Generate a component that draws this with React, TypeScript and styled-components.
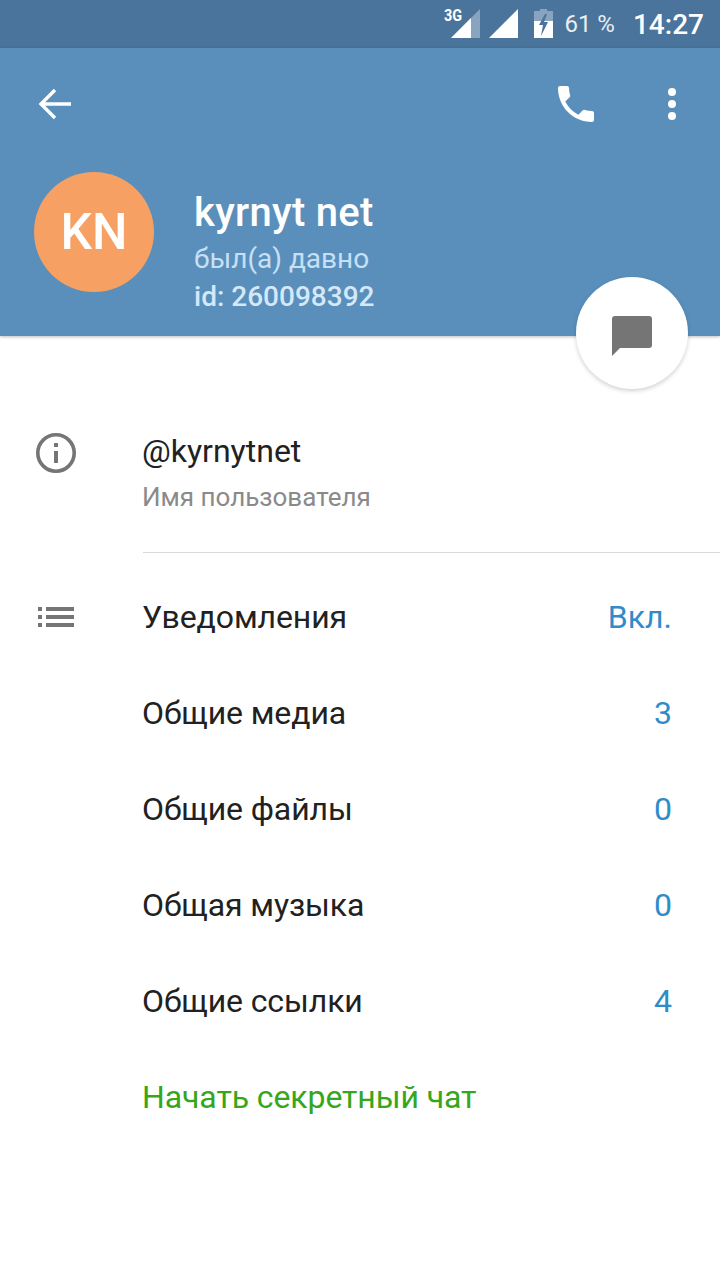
import styled, { createGlobalStyle } from "styled-components"

const GlobalStyle = createGlobalStyle`
    html, body {
        margin: 0;
        padding: 0;
        background: #fff;
        font-family: 'Roboto', 'Noto Sans', sans-serif;
    }
`

const rows = [
    { label: 'Общие медиа', value: '3' },
    { label: 'Общие файлы', value: '0' },
    { label: 'Общая музыка', value: '0' },
    { label: 'Общие ссылки', value: '4' },
]

const App = () => {
    return (
        <Page>
            <GlobalStyle />
            <StatusBar>
                <SignalWrap>
                    <NetLabel>3G</NetLabel>
                    <svg width="30" height="30" viewBox="0 0 30 30">
                        <path d="M0 29 L29 0 V29 Z" fill="#fff" fillOpacity="0.35" />
                        <path d="M0 29 L20 9 V29 Z" fill="#fff" />
                    </svg>
                </SignalWrap>
                <svg width="30" height="30" viewBox="0 0 30 30">
                    <path d="M0 29 L29 0 V29 Z" fill="#fff" />
                </svg>
                <BatteryIcon width="20" height="30" viewBox="0 0 20 30">
                    <path d="M6 0 H13 V2 H19 V12 H0 V2 H6 Z" fill="#fff" fillOpacity="0.35" />
                    <path d="M0 12 H19 V29 H0 Z" fill="#fff" />
                    <path d="M11 5 L5 16 H9 L7 27 L14 13 H10 L13 5 Z" fill="#4a749b" />
                </BatteryIcon>
                <BatteryText>61 %</BatteryText>
                <Clock>14:27</Clock>
            </StatusBar>
            <Header>
                <ActionBar>
                    <svg width="36" height="32" viewBox="0 0 36 32">
                        <path d="M33 16 H4 M17 2 L3 16 L17 30" fill="none" stroke="#fff" strokeWidth="3.4" />
                    </svg>
                    <ActionSpacer />
                    <svg width="48" height="48" viewBox="0 0 24 24">
                        <path d="M6.62 10.79c1.44 2.83 3.76 5.14 6.59 6.59l2.2-2.2c.27-.27.67-.36 1.02-.24 1.12.37 2.33.57 3.57.57.55 0 1 .45 1 1V20c0 .55-.45 1-1 1-9.39 0-17-7.61-17-17 0-.55.45-1 1-1h3.5c.55 0 1 .45 1 1 0 1.25.2 2.45.57 3.57.11.35.03.74-.25 1.02l-2.2 2.2z" fill="#fff" />
                    </svg>
                    <MenuDots>
                        <Dot />
                        <Dot />
                        <Dot />
                    </MenuDots>
                </ActionBar>
                <Profile>
                    <Avatar>KN</Avatar>
                    <ProfileText>
                        <Name>kyrnyt net</Name>
                        <Seen>был(а) давно</Seen>
                        <UserId>id: 260098392</UserId>
                    </ProfileText>
                </Profile>
                <Fab>
                    <svg width="40" height="40" viewBox="0 0 40 40">
                        <path d="M3 0 H37 A3 3 0 0 1 40 3 V29 A3 3 0 0 1 37 32 H8 L0 40 V3 A3 3 0 0 1 3 0 Z" fill="#757575" />
                    </svg>
                </Fab>
            </Header>
            <Content>
                <UsernameRow>
                    <IconSlot>
                        <svg width="40" height="40" viewBox="0 0 40 40">
                            <circle cx="20" cy="20" r="18.2" fill="none" stroke="#757575" strokeWidth="3.6" />
                            <rect x="18" y="18" width="4" height="12" fill="#757575" />
                            <rect x="18" y="10" width="4" height="4" fill="#757575" />
                        </svg>
                    </IconSlot>
                    <div>
                        <Username>@kyrnytnet</Username>
                        <UsernameHint>Имя пользователя</UsernameHint>
                    </div>
                </UsernameRow>
                <Divider />
                <MenuList>
                    <MenuRow>
                        <IconSlot>
                            <ListIcon width="36" height="20" viewBox="0 0 36 20">
                                <path d="M0 0h4v4H0zM8 0h28v4H8zM0 8h4v4H0zM8 8h28v4H8zM0 16h4v4H0zM8 16h28v4H8z" fill="#757575" />
                            </ListIcon>
                        </IconSlot>
                        <RowLabel>Уведомления</RowLabel>
                        <RowValue>Вкл.</RowValue>
                    </MenuRow>
                    {rows.map((row) => (
                        <MenuRow key={row.label}>
                            <IconSlot />
                            <RowLabel>{row.label}</RowLabel>
                            <RowValue>{row.value}</RowValue>
                        </MenuRow>
                    ))}
                    <MenuRow>
                        <IconSlot />
                        <RowLabel $green>Начать секретный чат</RowLabel>
                    </MenuRow>
                </MenuList>
            </Content>
        </Page>
    )
}

const Page = styled.div`
    width: 720px;
    height: 1280px;
    overflow: hidden;
    background: #fff;
`

const StatusBar = styled.div`
    height: 48px;
    box-sizing: border-box;
    background: #4a749b;
    display: flex;
    align-items: center;
    padding: 0 16px 0 0;
    justify-content: flex-end;
    color: #fff;
`

const SignalWrap = styled.div`
    position: relative;
    width: 30px;
    height: 30px;
    margin-right: 8px;
`

const NetLabel = styled.span`
    position: absolute;
    left: -7px;
    top: -1px;
    font-size: 16px;
    font-weight: 700;
    line-height: 16px;
    transform: scaleX(0.9);
    transform-origin: left top;
`

const BatteryIcon = styled.svg`
    margin-left: 15px;
`

const BatteryText = styled.span`
    font-size: 24px;
    margin-left: 10px;
    opacity: 0.88;
`

const Clock = styled.span`
    font-size: 28px;
    font-weight: 500;
    margin-left: 18px;
`

const Header = styled.div`
    position: relative;
    height: 288px;
    background: #5a8fbb;
    box-shadow: 0 1px 3px rgba(0, 0, 0, 0.25);
`

const ActionBar = styled.div`
    height: 112px;
    display: flex;
    align-items: center;
    padding: 0 44px 0 38px;
`

const ActionSpacer = styled.div`
    flex: 1;
`

const MenuDots = styled.div`
    display: flex;
    flex-direction: column;
    gap: 4px;
    margin-left: 68px;
`

const Dot = styled.span`
    width: 8px;
    height: 8px;
    border-radius: 50%;
    background: #fff;
`

const Profile = styled.div`
    display: flex;
    align-items: flex-start;
    padding: 12px 0 0 34px;
`

const Avatar = styled.div`
    width: 120px;
    height: 120px;
    border-radius: 50%;
    background: #f7a064;
    color: #fff;
    font-size: 50px;
    font-weight: 500;
    display: flex;
    align-items: center;
    justify-content: center;
`

const ProfileText = styled.div`
    margin-left: 40px;
    padding-top: 19px;
`

const Name = styled.div`
    font-size: 40px;
    font-weight: 500;
    letter-spacing: 0.3px;
    line-height: 44px;
    color: #fff;
`

const Seen = styled.div`
    font-size: 28px;
    line-height: 36px;
    margin-top: 6px;
    color: #c6e0f5;
`

const UserId = styled.div`
    font-size: 28px;
    font-weight: 500;
    line-height: 36px;
    margin-top: 2px;
    color: #d4e8f8;
`

const Fab = styled.div`
    position: absolute;
    left: 576px;
    top: 229px;
    width: 112px;
    height: 112px;
    box-sizing: border-box;
    padding-top: 6px;
    border-radius: 50%;
    background: #fff;
    box-shadow: 0 2px 4px rgba(0, 0, 0, 0.18);
    display: flex;
    align-items: center;
    justify-content: center;
`

const Content = styled.div`
    padding-top: 80px;
`

const IconSlot = styled.div`
    width: 142px;
    flex-shrink: 0;
    box-sizing: border-box;
    padding-left: 36px;
    display: flex;
`

const ListIcon = styled.svg`
    margin-left: 2px;
`

const UsernameRow = styled.div`
    display: flex;
    align-items: flex-start;
    height: 136px;
    padding-top: 17px;
    box-sizing: border-box;
`

const Username = styled.div`
    font-size: 32px;
    line-height: 36px;
    color: #212121;
`

const UsernameHint = styled.div`
    font-size: 26px;
    line-height: 30px;
    margin-top: 13px;
    color: #8a8a8a;
`

const Divider = styled.div`
    height: 1px;
    margin-left: 143px;
    background: #d9d9d9;
`

const MenuList = styled.div`
    padding-top: 16px;
`

const MenuRow = styled.div`
    display: flex;
    align-items: center;
    height: 96px;
    padding-right: 48px;
`

const RowLabel = styled.span<{ $green?: boolean }>`
    flex: 1;
    font-size: 32px;
    letter-spacing: -0.1px;
    color: ${({ $green }) => ($green ? '#36a61a' : '#212121')};
`

const RowValue = styled.span`
    font-size: 32px;
    color: #2f8cc9;
`

export default App
